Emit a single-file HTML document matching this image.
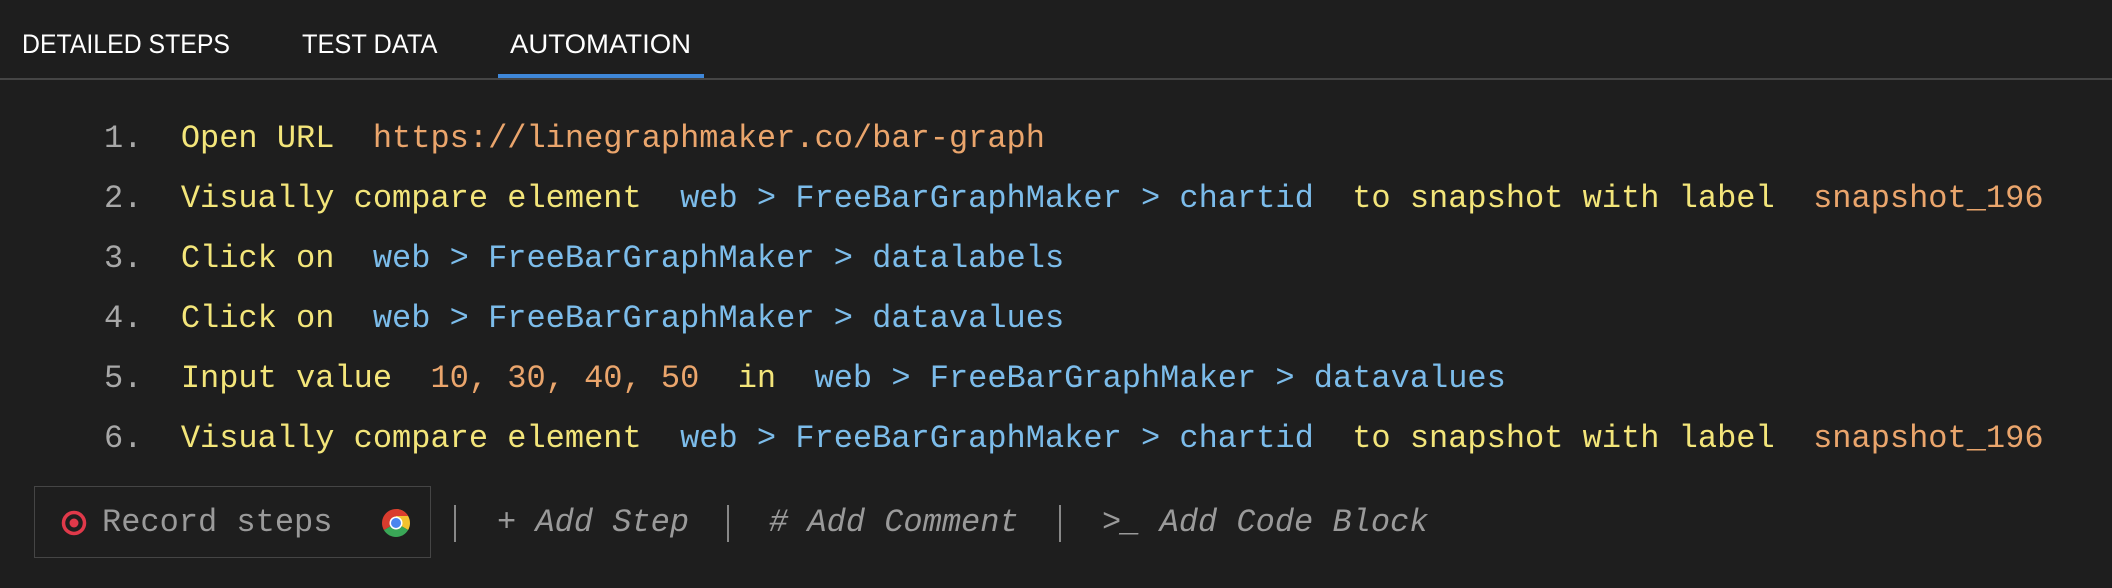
<!DOCTYPE html>
<html><head><meta charset="utf-8"><style>
html,body{margin:0;padding:0;background:#1e1e1e;width:2112px;height:588px;overflow:hidden;position:relative}
.tab{position:absolute;top:29px;font-family:"Liberation Sans",sans-serif;font-size:27px;color:#fff;white-space:nowrap;transform-origin:0 0;}
.ul{position:absolute;left:498px;top:74px;width:206px;height:4px;background:#3f87d8}
.bl{position:absolute;left:0;top:78px;width:2112px;height:2px;background:#454545}
.row{position:absolute;left:104px;font-family:"Liberation Mono",monospace;font-size:32px;white-space:pre;line-height:40px}
.n{color:#a8a8a8}.y{color:#f3e57a}.o{color:#eaa56c}.b{color:#7cbcea}
.box{position:absolute;left:34px;top:486px;width:397px;height:72px;border:1px solid #454545;box-sizing:border-box}
.g{position:absolute;font-family:"Liberation Mono",monospace;font-size:32px;color:#9a9a9a;white-space:pre;top:503px;line-height:40px}
.i{font-style:italic}
.sep{position:absolute;top:505px;width:2px;height:37px;background:#888}
</style></head><body>
<div class="tab" style="left:22px;transform:scaleX(0.92)">DETAILED STEPS</div>
<div class="tab" style="left:302px;transform:scaleX(0.94)">TEST DATA</div>
<div class="tab" style="left:510px;transform:scaleX(1.02)">AUTOMATION</div>
<div class="ul"></div><div class="bl"></div>

<div class="row" style="top:119px"><span class="n">1.  </span><span class="y">Open URL  </span><span class="o">https://linegraphmaker.co/bar-graph</span></div>
<div class="row" style="top:179px"><span class="n">2.  </span><span class="y">Visually compare element  </span><span class="b">web &gt; FreeBarGraphMaker &gt; chartid  </span><span class="y">to snapshot with label  </span><span class="o">snapshot_196</span></div>
<div class="row" style="top:239px"><span class="n">3.  </span><span class="y">Click on  </span><span class="b">web &gt; FreeBarGraphMaker &gt; datalabels</span></div>
<div class="row" style="top:299px"><span class="n">4.  </span><span class="y">Click on  </span><span class="b">web &gt; FreeBarGraphMaker &gt; datavalues</span></div>
<div class="row" style="top:359px"><span class="n">5.  </span><span class="y">Input value  </span><span class="o">10, 30, 40, 50  </span><span class="y">in  </span><span class="b">web &gt; FreeBarGraphMaker &gt; datavalues</span></div>
<div class="row" style="top:419px"><span class="n">6.  </span><span class="y">Visually compare element  </span><span class="b">web &gt; FreeBarGraphMaker &gt; chartid  </span><span class="y">to snapshot with label  </span><span class="o">snapshot_196</span></div>

<div class="box"></div>
<svg style="position:absolute;left:60px;top:509px" width="28" height="28" viewBox="0 0 28 28"><circle cx="14" cy="14" r="10.5" fill="none" stroke="#e0394a" stroke-width="3.5"/><circle cx="14" cy="14" r="4.5" fill="#e0394a"/></svg>
<div class="g" style="left:102px">Record steps</div>
<svg style="position:absolute;left:382px;top:509px" width="28" height="28" viewBox="-14 -14 28 28">
<path d="M0 0 L0 -14 A14 14 0 0 1 12.12 7 Z" fill="#f2c230"/>
<path d="M0 0 L12.12 7 A14 14 0 0 1 -12.12 7 Z" fill="#3aa757"/>
<path d="M0 0 L-12.12 7 A14 14 0 0 1 0 -14 Z" fill="#d93c2e"/>
<path d="M0 -14 A14 14 0 0 1 12.12 -7 L0 -7 Z" fill="#d93c2e"/>
<circle r="6.5" fill="#fff"/><circle r="5" fill="#4a85ef"/></svg>
<div class="sep" style="left:454px"></div>
<div class="g i" style="left:497px">+ Add Step</div>
<div class="sep" style="left:727px"></div>
<div class="g i" style="left:769px"># Add Comment</div>
<div class="sep" style="left:1059px"></div>
<div class="g i" style="left:1102px">&gt;_ Add Code Block</div>
</body></html>
